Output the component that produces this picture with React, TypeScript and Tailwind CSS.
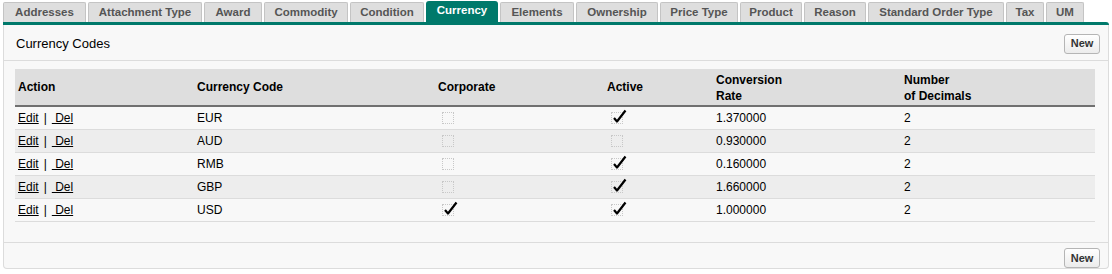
import React from "react";

const tabs = [
  { label: "Addresses", w: "w-[83px]" },
  { label: "Attachment Type", w: "w-[114px]" },
  { label: "Award", w: "w-[58px]" },
  { label: "Commodity", w: "w-[84px]" },
  { label: "Condition", w: "w-[74px]" },
  { label: "Currency", w: "w-[72px]" },
  { label: "Elements", w: "w-[74px]" },
  { label: "Ownership", w: "w-[82px]" },
  { label: "Price Type", w: "w-[78px]" },
  { label: "Product", w: "w-[62px]" },
  { label: "Reason", w: "w-[62px]" },
  { label: "Standard Order Type", w: "w-[136px]" },
  { label: "Tax", w: "w-[38px]" },
  { label: "UM", w: "w-[38px]" },
];

const rows = [
  { code: "EUR", corporate: false, active: true, rate: "1.370000", decimals: 2 },
  { code: "AUD", corporate: false, active: false, rate: "0.930000", decimals: 2 },
  { code: "RMB", corporate: false, active: true, rate: "0.160000", decimals: 2 },
  { code: "GBP", corporate: false, active: true, rate: "1.660000", decimals: 2 },
  { code: "USD", corporate: true, active: true, rate: "1.000000", decimals: 2 },
];

const Check = ({ checked }: { checked: boolean }) => (
  <div className="relative w-[12px] h-[12px] border border-dotted border-[#c8c8c8]">
    {checked && (
      <svg
        className="absolute left-[1px] -top-[4px]"
        width="14"
        height="15"
        viewBox="0 0 14 15"
      >
        <path
          d="M1 9 L4 12.5 L12.5 1.5"
          fill="none"
          stroke="#000"
          strokeWidth="2.2"
          strokeLinejoin="round"
        />
      </svg>
    )}
  </div>
);

const NewButton = () => (
  <button className="h-[20px] w-[36px] rounded-[3px] border border-[#b5b5b5] bg-gradient-to-b from-white to-[#ececec] text-[11px] font-bold text-[#333]">
    New
  </button>
);

export default function App() {
  return (
    <div className="bg-white w-[1112px] h-[274px] pt-[2px] pl-[3px] font-['Liberation_Sans',Arial,sans-serif] text-[12px] text-black">
      <div className="flex gap-[2px] items-end h-[20px]">
        {tabs.map((t) =>
          t.label === "Currency" ? (
            <div
              key={t.label}
              className={`${t.w} h-[21px] -mt-[1px] rounded-t-[3px] bg-[#00796b] text-white font-bold text-[11.5px] flex items-center justify-center pb-[2px]`}
            >
              {t.label}
            </div>
          ) : (
            <div
              key={t.label}
              className={`${t.w} h-[20px] rounded-t-[2px] border border-b-0 border-[#c4c4c4] bg-[#dedede] text-[#555] font-bold text-[11.5px] flex items-center justify-center`}
            >
              {t.label}
            </div>
          )
        )}
      </div>
      <div className="w-[1106px] h-[3px] bg-[#00796b] rounded-tr-[3px]" />
      <div className="w-[1106px] h-[244px] bg-[#f8f8f8] border border-t-0 border-[#dcdcdc] rounded-b-[4px] flex flex-col">
        <div className="flex items-center justify-between h-[36px] pt-[2px] pl-[12px] pr-[8px] border-b border-[#dcdcdc]">
          <div className="text-[13px] text-black">Currency Codes</div>
          <NewButton />
        </div>
        <div className="pl-[11px] pt-[8px] h-[182px] border-b border-[#dcdcdc]">
          <table className="w-[1080px] border-collapse table-fixed">
            <colgroup>
              <col className="w-[179px]" />
              <col className="w-[241px]" />
              <col className="w-[169px]" />
              <col className="w-[109px]" />
              <col className="w-[188px]" />
              <col className="w-[194px]" />
            </colgroup>
            <thead>
              <tr className="bg-[#dedede] h-[37px] border-b-2 border-[#707070] text-left font-bold">
                <th className="pl-[3px] font-bold">Action</th>
                <th className="pl-[3px] font-bold">Currency Code</th>
                <th className="pl-[3px] font-bold">Corporate</th>
                <th className="pl-[3px] font-bold">Active</th>
                <th className="pl-[3px] pt-[2px] font-bold leading-[16px]">
                  Conversion
                  <br />
                  Rate
                </th>
                <th className="pl-[3px] pt-[2px] font-bold leading-[16px]">
                  Number
                  <br />
                  of Decimals
                </th>
              </tr>
            </thead>
            <tbody>
              {rows.map((r, i) => (
                <tr
                  key={r.code}
                  className={`h-[23px] border-b border-[#dcdcdc] ${
                    i % 2 === 1 ? "bg-[#ededed]" : "bg-[#f8f8f8]"
                  }`}
                >
                  <td className="pl-[3px]">
                    <span className="underline">Edit</span>
                    <span className="mx-[5px]">|</span>
                    <span className="underline">&nbsp;Del</span>
                  </td>
                  <td className="pl-[3px]">{r.code}</td>
                  <td className="pl-[7px]">
                    <Check checked={r.corporate} />
                  </td>
                  <td className="pl-[7px]">
                    <Check checked={r.active} />
                  </td>
                  <td className="pl-[3px]">{r.rate}</td>
                  <td className="pl-[3px]">{r.decimals}</td>
                </tr>
              ))}
            </tbody>
          </table>
        </div>
        <div className="flex-1 flex items-start justify-end pt-[5px] pr-[8px]">
          <NewButton />
        </div>
      </div>
    </div>
  );
}
